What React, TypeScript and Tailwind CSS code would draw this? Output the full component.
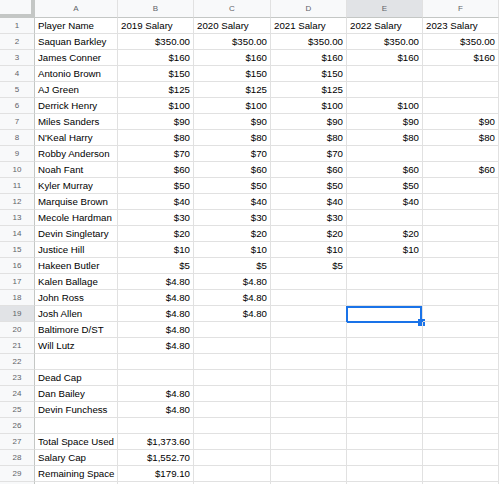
import React from 'react';

type Cell = string | undefined;

const columns = ['A', 'B', 'C', 'D', 'E', 'F'];

const rows: Cell[][] = [
  ['Player Name', '2019 Salary', '2020 Salary', '2021 Salary', '2022 Salary', '2023 Salary'],
  ['Saquan Barkley', '$350.00', '$350.00', '$350.00', '$350.00', '$350.00'],
  ['James Conner', '$160', '$160', '$160', '$160', '$160'],
  ['Antonio Brown', '$150', '$150', '$150'],
  ['AJ Green', '$125', '$125', '$125'],
  ['Derrick Henry', '$100', '$100', '$100', '$100'],
  ['Miles Sanders', '$90', '$90', '$90', '$90', '$90'],
  ["N'Keal Harry", '$80', '$80', '$80', '$80', '$80'],
  ['Robby Anderson', '$70', '$70', '$70'],
  ['Noah Fant', '$60', '$60', '$60', '$60', '$60'],
  ['Kyler Murray', '$50', '$50', '$50', '$50'],
  ['Marquise Brown', '$40', '$40', '$40', '$40'],
  ['Mecole Hardman', '$30', '$30', '$30'],
  ['Devin Singletary', '$20', '$20', '$20', '$20'],
  ['Justice Hill', '$10', '$10', '$10', '$10'],
  ['Hakeen Butler', '$5', '$5', '$5'],
  ['Kalen Ballage', '$4.80', '$4.80'],
  ['John Ross', '$4.80', '$4.80'],
  ['Josh Allen', '$4.80', '$4.80'],
  ['Baltimore D/ST', '$4.80'],
  ['Will Lutz', '$4.80'],
  [],
  ['Dead Cap'],
  ['Dan Bailey', '$4.80'],
  ['Devin Funchess', '$4.80'],
  [],
  ['Total Space Used', '$1,373.60'],
  ['Salary Cap', '$1,552.70'],
  ['Remaining Space', '$179.10'],
  [],
];

const selRow = 19;
const selCol = 4;

const isNumber = (v: Cell) => !!v && v.startsWith('$');

export default function App() {
  return (
    <div
      className="w-[499px] h-[484px] overflow-hidden bg-white text-[9.7px] text-black"
      style={{ fontFamily: '"Liberation Sans", Arial, sans-serif' }}
    >
      <div className="grid grid-cols-[35px_83px_76px_77px_76px_76px_76px] auto-rows-[16px] grid-rows-[18px]">
        <div className="bg-[#f8f9fa] border-r-[4px] border-b-[4px] border-[#c4c7c5] h-[18px]" />
        {columns.map((c, i) => (
          <div
            key={c}
            className={`h-[18px] flex items-center justify-center text-[8px] text-[#5f6368] border-r border-b border-b-[#c4c7c5] border-r-[#e1e1e1] ${
              i === selCol ? 'bg-[#e1e3e6]' : 'bg-[#f8f9fa]'
            }`}
          >
            {c}
          </div>
        ))}
        {rows.map((row, r) => {
          const n = r + 1;
          return (
            <React.Fragment key={n}>
              <div
                className={`h-[16px] flex items-center justify-center text-[8px] text-[#5f6368] border-r border-b border-r-[#c4c7c5] border-b-[#e1e1e1] ${
                  n === selRow ? 'bg-[#e1e3e6]' : 'bg-[#f8f9fa]'
                }`}
              >
                {n < rows.length ? n : ''}
              </div>
              {columns.map((_, c) => {
                const v = row[c];
                const selected = n === selRow && c === selCol;
                return (
                  <div
                    key={c}
                    className={`relative h-[16px] flex items-center px-[3px] whitespace-nowrap border-r border-b border-[#e1e1e1] leading-none ${
                      isNumber(v) ? 'justify-end' : 'justify-start'
                    }`}
                  >
                    {v}
                    {selected && (
                      <>
                        <div className="absolute -left-px top-0 w-[76px] h-[17px] border-2 border-[#1a73e8]" />
                        <div className="absolute left-[71px] top-[13px] w-[7px] h-[7px] bg-[#1a73e8]" />
                      </>
                    )}
                  </div>
                );
              })}
            </React.Fragment>
          );
        })}
      </div>
    </div>
  );
}
